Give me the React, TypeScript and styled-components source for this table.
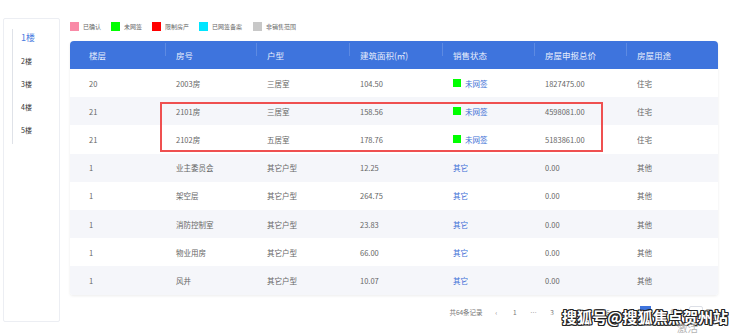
import * as React from 'react';
import styled, { createGlobalStyle } from 'styled-components';

const GlobalStyle = createGlobalStyle`
  html, body {
    margin: 0;
    padding: 0;
    background: #fff;
    font-family: "Noto Sans CJK SC", "Noto Sans", sans-serif;
  }
`;

const Page = styled.div`
  position: relative;
  width: 740px;
  height: 334px;
  overflow: hidden;
  display: flex;
  align-items: flex-start;
  padding: 18px 0 0 3px;
  box-sizing: border-box;
`;

const Sidebar = styled.div`
  width: 57px;
  height: 304px;
  box-sizing: border-box;
  border: 1px solid #eceef3;
  border-radius: 2px;
  padding: 10px 0 0 8px;
`;

const TabList = styled.div`
  border-left: 1px solid #dfe2e8;
  display: flex;
  flex-direction: column;
`;

const Tab = styled.div<{ $active?: boolean }>`
  height: 23px;
  line-height: 18px;
  padding-left: 8px;
  font-size: ${(p) => (p.$active ? '9px' : '7px')};
  color: ${(p) => (p.$active ? '#4a7be0' : '#333')};
`;

const Main = styled.div`
  margin-left: 10px;
  width: 648px;
  display: flex;
  flex-direction: column;
`;

const Legend = styled.div`
  display: flex;
  align-items: center;
  height: 9px;
  margin-top: 4px;
  margin-bottom: 10px;
`;

const LegendItem = styled.div<{ $w: number }>`
  display: flex;
  align-items: center;
  width: ${(p) => p.$w}px;
  font-size: 6px;
  color: #666;
`;

const Swatch = styled.span<{ $color: string; $size?: number }>`
  display: inline-block;
  width: ${(p) => p.$size || 9}px;
  height: ${(p) => p.$size || 9}px;
  background: ${(p) => p.$color};
  margin-right: 4px;
  flex-shrink: 0;
`;

const TableWrap = styled.div`
  position: relative;
  border-radius: 4px 4px 3px 3px;
  box-shadow: 0 1px 3px rgba(0, 0, 0, 0.08);
  overflow: hidden;
`;

const cols = '95px 91px 93px 93px 92px 92px 1fr';

const HeaderRow = styled.div`
  display: grid;
  grid-template-columns: ${cols};
  height: 28px;
  background: #3e74dd;
  align-items: center;
`;

const HeadCell = styled.div<{ $first?: boolean }>`
  position: relative;
  padding-left: ${(p) => (p.$first ? '19px' : '11px')};
  font-size: 8.5px;
  color: #e8eefc;
  ${(p) =>
    p.$first
      ? ''
      : `&::before {
    content: '';
    position: absolute;
    left: 0;
    top: -6px;
    height: 13px;
    width: 1px;
    background: rgba(255, 255, 255, 0.16);
  }`}
`;

const Row = styled.div<{ $alt?: boolean }>`
  display: grid;
  grid-template-columns: ${cols};
  height: 28.2px;
  align-items: center;
  background: ${(p) => (p.$alt ? '#f5f6fa' : '#fff')};
`;

const Cell = styled.div<{ $first?: boolean; $link?: boolean }>`
  display: flex;
  align-items: center;
  padding-left: ${(p) => (p.$first ? '19px' : '11px')};
  font-size: 7.5px;
  color: ${(p) => (p.$link ? '#3d6fd6' : '#666')};
`;

const Highlight = styled.div`
  position: absolute;
  left: 90px;
  top: 61px;
  width: 443px;
  height: 50px;
  box-sizing: border-box;
  border: 2px solid #ef5050;
  pointer-events: none;
`;

const Pager = styled.div`
  display: flex;
  align-items: center;
  height: 12px;
  margin-top: 11px;
  padding-left: 375px;
  font-size: 6.5px;
  color: #777;
`;

const PagerItem = styled.div<{ $active?: boolean; $w?: number }>`
  width: ${(p) => p.$w || 18.6}px;
  height: 12px;
  display: flex;
  align-items: center;
  justify-content: center;
  ${(p) =>
    p.$active
      ? `background: #3e74dd; color: #fff; width: 11px; margin: 0 4px;`
      : ''}
`;

const PageInput = styled.div`
  width: 14px;
  height: 11px;
  box-sizing: border-box;
  border: 1px solid #dcdfe6;
  border-radius: 2px;
  margin: 0 3px 0 4px;
`;

const Watermark = styled.div`
  position: absolute;
  left: 562px;
  top: 307px;
  font-size: 15px;
  line-height: 20px;
  font-weight: 700;
  letter-spacing: 0.1px;
  color: #fff;
  text-shadow: -1px -1px 0 #222, 1px -1px 0 #222, -1px 1px 0 #222,
    1px 1px 0 #222, 0 1px 0 #222, 0 -1px 0 #222, 1px 0 0 #222, -1px 0 0 #222;
`;

const Activate = styled.div`
  position: absolute;
  left: 677px;
  top: 322px;
  line-height: 12px;
  font-family: "Noto Sans", "Noto Sans CJK SC", sans-serif;
  font-size: 10.5px;
  color: #b4b4b4;
`;

const legend = [
  { label: '已确认', color: '#f98aa7', w: 41 },
  { label: '未网签', color: '#00ff00', w: 41 },
  { label: '限制房产', color: '#ff0000', w: 47 },
  { label: '已网签备案', color: '#00e5ff', w: 54 },
  { label: '非销售范围', color: '#c8c8c8', w: 60 },
];

type RowData = {
  floor: string;
  room: string;
  type: string;
  area: string;
  status: 'sign' | 'other';
  price: string;
  use: string;
};

const rows: RowData[] = [
  { floor: '20', room: '2003房', type: '三居室', area: '104.50', status: 'sign', price: '1827475.00', use: '住宅' },
  { floor: '21', room: '2101房', type: '三居室', area: '158.56', status: 'sign', price: '4598081.00', use: '住宅' },
  { floor: '21', room: '2102房', type: '五居室', area: '178.76', status: 'sign', price: '5183861.00', use: '住宅' },
  { floor: '1', room: '业主委员会', type: '其它户型', area: '12.25', status: 'other', price: '0.00', use: '其他' },
  { floor: '1', room: '架空层', type: '其它户型', area: '264.75', status: 'other', price: '0.00', use: '其他' },
  { floor: '1', room: '消防控制室', type: '其它户型', area: '23.83', status: 'other', price: '0.00', use: '其他' },
  { floor: '1', room: '物业用房', type: '其它户型', area: '66.00', status: 'other', price: '0.00', use: '其他' },
  { floor: '1', room: '风井', type: '其它户型', area: '10.07', status: 'other', price: '0.00', use: '其他' },
];

const headers = ['楼层', '房号', '户型', '建筑面积(㎡)', '销售状态', '房屋申报总价', '房屋用途'];

export default function App() {
  return (
    <>
      <GlobalStyle />
      <Page>
        <Sidebar>
          <TabList>
            {['1楼', '2楼', '3楼', '4楼', '5楼'].map((t, i) => (
              <Tab key={t} $active={i === 0}>
                {t}
              </Tab>
            ))}
          </TabList>
        </Sidebar>
        <Main>
          <Legend>
            {legend.map((l) => (
              <LegendItem key={l.label} $w={l.w}>
                <Swatch $color={l.color} />
                {l.label}
              </LegendItem>
            ))}
          </Legend>
          <TableWrap>
            <HeaderRow>
              {headers.map((h, i) => (
                <HeadCell key={h} $first={i === 0}>
                  {h}
                </HeadCell>
              ))}
            </HeaderRow>
            {rows.map((r, i) => (
              <Row key={r.room} $alt={i % 2 === 1}>
                <Cell $first>{r.floor}</Cell>
                <Cell>{r.room}</Cell>
                <Cell>{r.type}</Cell>
                <Cell>{r.area}</Cell>
                {r.status === 'sign' ? (
                  <Cell $link>
                    <Swatch $color="#00ff00" $size={8} />
                    未网签
                  </Cell>
                ) : (
                  <Cell $link>其它</Cell>
                )}
                <Cell>{r.price}</Cell>
                <Cell>{r.use}</Cell>
              </Row>
            ))}
            <Highlight />
          </TableWrap>
          <Pager>
            <PagerItem $w={42}>共64条记录</PagerItem>
            <PagerItem>‹</PagerItem>
            <PagerItem>1</PagerItem>
            <PagerItem>…</PagerItem>
            <PagerItem>3</PagerItem>
            <PagerItem>4</PagerItem>
            <PagerItem>5</PagerItem>
            <PagerItem>6</PagerItem>
            <PagerItem>7</PagerItem>
            <PagerItem $active>8</PagerItem>
            <PagerItem $w={14}>›</PagerItem>
            <PagerItem $w={16}>前往</PagerItem>
            <PageInput />
            <span>页</span>
          </Pager>
        </Main>
        <Watermark>搜狐号@搜狐焦点贺州站</Watermark>
        <Activate>激活 Windows</Activate>
      </Page>
    </>
  );
}
